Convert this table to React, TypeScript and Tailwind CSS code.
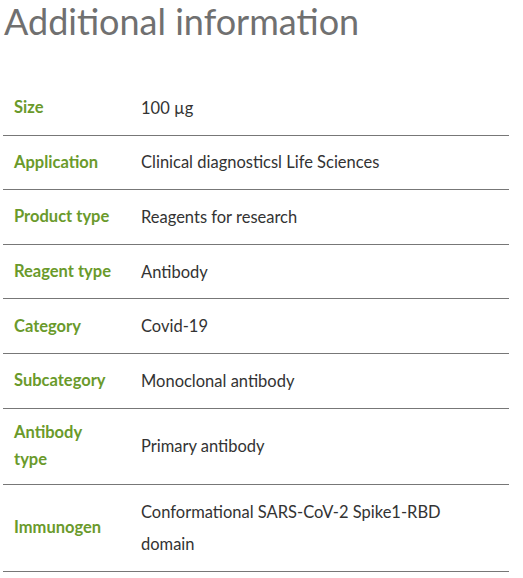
const ROWS: [string, string][] = [
  ['Size', '100 µg'],
  ['Application', 'Clinical diagnosticsl Life Sciences'],
  ['Product type', 'Reagents for research'],
  ['Reagent type', 'Antibody'],
  ['Category', 'Covid-19'],
  ['Subcategory', 'Monoclonal antibody'],
  ['Antibody type', 'Primary antibody'],
  ['Immunogen', 'Conformational SARS-CoV-2 Spike1-RBD domain'],
]

export default function App() {
  return (
    <div className="bg-white w-[523px] h-[578px] overflow-hidden font-['Lato',sans-serif]">
      <h2 className="text-[36px] leading-[40px] text-[#707070] pl-[4px] pt-[1px]">Additional information</h2>

      <table className="ml-[3px] mt-[40px] w-[506px] border-collapse table-fixed">
        <tbody>
          {ROWS.map(([label, value]) => (
            <tr key={label} className="border-b border-[#777]">
              <th className="w-[138px] pl-[11px] pr-[27px] py-[10.8px] text-left align-middle text-[16.5px] leading-[27px] font-bold text-[#6a9a2b]">
                {label}
              </th>
              <td className="py-[10.8px] pr-16 align-middle text-[16.5px] leading-[32px] text-[#333]">
                {value}
              </td>
            </tr>
          ))}
        </tbody>
      </table>
    </div>
  )
}
